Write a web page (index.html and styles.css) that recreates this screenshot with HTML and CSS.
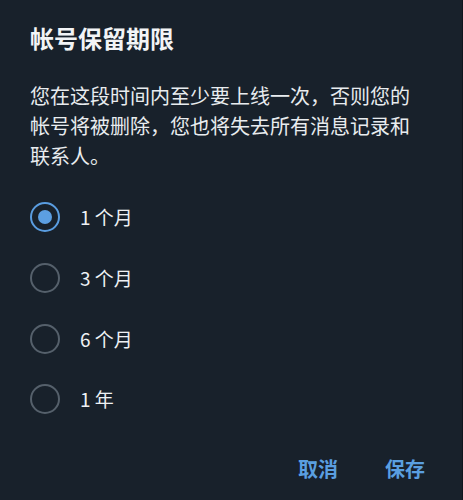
FILE: index.html
```html
<!DOCTYPE html>
<html lang="zh-CN">
<head>
<meta charset="utf-8">
<title>帐号保留期限</title>
<link rel="stylesheet" href="styles.css">
</head>
<body>
<div class="screen">
  <div class="dialog">
    <h1 class="title">帐号保留期限</h1>
    <p class="desc">您在这段时间内至少要上线一次，否则您的帐号将被删除，您也将失去所有消息记录和联系人。</p>
    <div class="options">
      <label class="option"><span class="radio checked"></span><span class="label">1 个月</span></label>
      <label class="option"><span class="radio"></span><span class="label">3 个月</span></label>
      <label class="option"><span class="radio"></span><span class="label">6 个月</span></label>
      <label class="option"><span class="radio"></span><span class="label">1 年</span></label>
    </div>
    <div class="actions">
      <span class="btn">取消</span>
      <span class="btn">保存</span>
    </div>
  </div>
  <div class="scrollbar">
    <div class="thumb"></div>
    <div class="ticks"><i></i><i></i><i></i><i></i></div>
  </div>
</div>
</body>
</html>
```

FILE: styles.css
```css
html, body {
  margin: 0;
  padding: 0;
  background: #18212b;
}
body {
  font-family: "Noto Sans CJK SC", "Noto Sans", sans-serif;
  color: #eef1f4;
}
.screen {
  display: flex;
  width: 463px;
  height: 500px;
  overflow: hidden;
}
.dialog {
  flex: 1;
  background: #18212b;
  padding: 22px 37px 0 30px;
  box-sizing: border-box;
}
.title {
  margin: 0;
  font-size: 24px;
  line-height: 32px;
  font-weight: 700;
  color: #f2f4f6;
}
.desc {
  margin: 27px 0 0 0;
  font-size: 20px;
  line-height: 30px;
  color: #e8ecef;
  width: 395px;
}
.options {
  margin-top: 16px;
  display: flex;
  flex-direction: column;
}
.option {
  display: flex;
  align-items: center;
  gap: 20px;
  height: 60.7px;
}
.radio {
  width: 30px;
  height: 30px;
  box-sizing: border-box;
  border: 2.5px solid #55606b;
  border-radius: 50%;
  display: flex;
  align-items: center;
  justify-content: center;
  flex: none;
}
.radio.checked {
  border-color: #5a9de0;
}
.radio.checked::after {
  content: "";
  width: 14px;
  height: 14px;
  border-radius: 50%;
  background: #5c9fe2;
}
.label {
  font-size: 19px;
  line-height: 26px;
  color: #eef1f4;
}
.actions {
  margin-top: 19px;
  display: flex;
  justify-content: flex-end;
  gap: 47px;
  height: 40px;
  align-items: center;
}
.btn {
  font-size: 20px;
  font-weight: 700;
  color: #5a9fe0;
  line-height: 28px;
}
.scrollbar {
  width: 5px;
  flex: none;
  background: #0f161e;
  display: flex;
  flex-direction: column;
  align-items: flex-end;
  padding-top: 180px;
  box-sizing: border-box;
}
.thumb {
  width: 4px;
  height: 25px;
  background: #4a535c;
}
.ticks {
  margin-top: 205px;
  display: flex;
  flex-direction: column;
  gap: 3px;
}
.ticks i {
  display: block;
  width: 4px;
  height: 1px;
  background: #3f4952;
}
```
